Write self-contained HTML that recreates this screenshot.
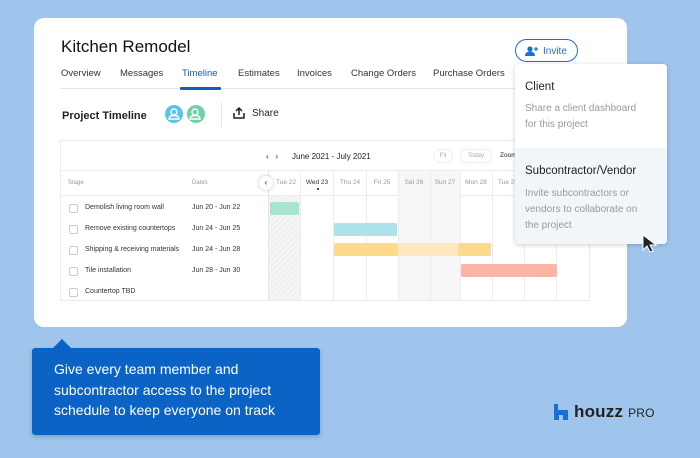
<!DOCTYPE html>
<html><head><meta charset="utf-8"><style>
*{margin:0;padding:0;box-sizing:border-box}
body{width:700px;height:458px;background:#9fc5ec;font-family:"Liberation Sans",sans-serif;position:relative;overflow:hidden;color:#222}
.abs{position:absolute}
.card{left:34px;top:18px;width:593px;height:309px;background:#fff;border-radius:10px}
.tab{top:68px;font-size:9.5px;color:#333}
.day{top:179px;font-size:6.5px;color:#999;width:32px;text-align:center}
.vl{top:170px;width:1px;height:130px;background:#ececec}
.row{font-size:7px;color:#333}
.cb{width:9px;height:9px;border:1px solid #ccc;border-radius:2px;background:#fff}
.bar{height:13px;border-radius:2px}
</style></head><body>
<div class="abs card"></div>
<div class="abs" style="left:61px;top:37px;font-size:17px;color:#111">Kitchen Remodel</div>
<div class="abs tab" style="left:61px">Overview</div>
<div class="abs tab" style="left:120px">Messages</div>
<div class="abs tab" style="left:182px;color:#0b5fbf">Timeline</div>
<div class="abs tab" style="left:238px">Estimates</div>
<div class="abs tab" style="left:297px">Invoices</div>
<div class="abs tab" style="left:351px">Change Orders</div>
<div class="abs tab" style="left:433px">Purchase Orders</div>
<div class="abs" style="left:60px;top:88px;width:455px;height:1px;background:#e6e6e6"></div>
<div class="abs" style="left:180px;top:87px;width:41px;height:3px;background:#0b5fbf;border-radius:1px"></div>
<div class="abs" style="left:62px;top:110px;font-size:11px;font-weight:bold;color:#222">Project Timeline</div>
<svg class="abs" style="left:165px;top:105px" width="18" height="18" viewBox="0 0 18 18"><circle cx="9" cy="9" r="9" fill="#5ac4e8"/><circle cx="9" cy="7" r="3" fill="none" stroke="#fff" stroke-width="1.4"/><path d="M4 14c0-2.5 2-3.5 5-3.5s5 1 5 3.5z" fill="none" stroke="#fff" stroke-width="1.4"/></svg>
<svg class="abs" style="left:187px;top:105px" width="18" height="18" viewBox="0 0 18 18"><circle cx="9" cy="9" r="9" fill="#6fd0a6"/><circle cx="8" cy="7" r="3" fill="none" stroke="#fff" stroke-width="1.4"/><path d="M3 14c0-2.5 2-3.5 5-3.5s5 1 5 3.5z" fill="none" stroke="#fff" stroke-width="1.4"/></svg>
<div class="abs" style="left:221px;top:102px;width:1px;height:25px;background:#e6e6e6"></div>
<svg class="abs" style="left:233px;top:107px" width="12" height="12" viewBox="0 0 12 12" fill="none" stroke="#222" stroke-width="1.5"><path d="M6 8V1M3 4l3-3 3 3M1 6v5h10V6"/></svg>
<div class="abs" style="left:252px;top:108px;font-size:10px">Share</div>
<!-- gantt -->
<div class="abs" style="left:60px;top:140px;width:530px;height:161px;border:1px solid #ececec;background:#fff"></div>
<div class="abs" style="left:60px;top:170px;width:530px;height:1px;background:#ececec"></div>
<div class="abs" style="left:60px;top:195px;width:530px;height:1px;background:#ececec"></div>
<div class="abs" style="left:266px;top:152px;font-size:8px">‹ &nbsp; ›</div>
<div class="abs" style="left:292px;top:152px;font-size:8px;color:#222">June 2021 - July 2021</div>
<div class="abs" style="left:433px;top:149px;width:20px;height:14px;border:1px solid #eee;border-radius:7px;font-size:6px;color:#aaa;text-align:center;line-height:12px">Fit</div>
<div class="abs" style="left:460px;top:149px;width:32px;height:14px;border:1px solid #eee;border-radius:7px;font-size:6px;color:#aaa;text-align:center;line-height:12px">Today</div>
<div class="abs" style="left:500px;top:152px;font-size:6.5px">Zoom</div>
<div class="abs" style="left:68px;top:180px;font-size:6px;color:#999">Stage</div>
<div class="abs" style="left:192px;top:180px;font-size:6px;color:#999">Dates</div>
<div class="abs" style="left:268px;top:171px;width:1px;height:130px;background:#e6e6e6"></div>
<div class="abs" style="left:269px;top:196px;width:31px;height:104px;background:repeating-linear-gradient(135deg,#f6f6f6 0 2px,#efefef 2px 4px)"></div>
<div class="abs" style="left:398px;top:171px;width:62px;height:129px;background:#f7f7f7"></div>
<div class="abs vl" style="left:300px"></div><div class="abs vl" style="left:333px"></div><div class="abs vl" style="left:366px"></div><div class="abs vl" style="left:398px"></div><div class="abs vl" style="left:430px"></div><div class="abs vl" style="left:460px"></div><div class="abs vl" style="left:492px"></div><div class="abs vl" style="left:524px"></div><div class="abs vl" style="left:556px"></div>
<div class="abs day" style="left:270px">Tue 22</div>
<div class="abs day" style="left:301px;color:#333">Wed 23</div>
<div class="abs" style="left:317px;top:188px;width:2px;height:2px;background:#0b5fbf"></div>
<div class="abs day" style="left:334px">Thu 24</div>
<div class="abs day" style="left:366px">Fri 25</div>
<div class="abs day" style="left:398px">Sat 26</div>
<div class="abs day" style="left:429px">Sun 27</div>
<div class="abs day" style="left:460px">Mon 28</div>
<div class="abs day" style="left:492px">Tue 29</div>
<div class="abs" style="left:259px;top:176px;width:14px;height:14px;border-radius:50%;background:#fff;box-shadow:0 0 3px rgba(0,0,0,.25);font-size:8px;text-align:center;line-height:13px">‹</div>
<div class="abs cb" style="left:69px;top:204px"></div><div class="abs row" style="left:85px;top:204px">Demolish living room wall</div><div class="abs row" style="left:192px;top:204px">Jun 20 - Jun 22</div>
<div class="abs cb" style="left:69px;top:225px"></div><div class="abs row" style="left:85px;top:225px">Remove existing countertops</div><div class="abs row" style="left:192px;top:225px">Jun 24 - Jun 25</div>
<div class="abs cb" style="left:69px;top:246px"></div><div class="abs row" style="left:85px;top:246px">Shipping &amp; receiving materials</div><div class="abs row" style="left:192px;top:246px">Jun 24 - Jun 28</div>
<div class="abs cb" style="left:69px;top:267px"></div><div class="abs row" style="left:85px;top:267px">Tile installation</div><div class="abs row" style="left:192px;top:267px">Jun 28 - Jun 30</div>
<div class="abs cb" style="left:69px;top:288px"></div><div class="abs row" style="left:85px;top:288px">Countertop TBD</div>
<div class="abs bar" style="left:270px;top:202px;width:29px;background:#a9e4cf"></div>
<div class="abs bar" style="left:334px;top:223px;width:63px;background:#ade2ea"></div>
<div class="abs bar" style="left:334px;top:243px;width:64px;background:#fdd98c"></div>
<div class="abs bar" style="left:398px;top:243px;width:60px;background:#fde8bf;border-radius:0"></div>
<div class="abs bar" style="left:458px;top:243px;width:33px;background:#fdd98c"></div>
<div class="abs bar" style="left:461px;top:264px;width:96px;background:#fbb5a7"></div>
<!-- invite -->
<div class="abs" style="left:515px;top:39px;width:63px;height:23px;border:1.5px solid #1a6fd0;border-radius:12px;color:#1a6fd0;font-size:10px;line-height:21px;padding-left:27px;padding-top:1px">Invite</div>
<svg class="abs" style="left:525px;top:46px" width="14" height="10" viewBox="0 0 14 10" fill="#1a6fd0"><circle cx="5" cy="3" r="2.6"/><path d="M0 10c0-3 2-4.5 5-4.5s5 1.5 5 4.5z"/><path d="M11 1v4M9 3h4" stroke="#1a6fd0" stroke-width="1.2"/></svg>
<div class="abs" style="left:515px;top:64px;width:152px;height:180px;background:#fff;border-radius:4px;box-shadow:0 1px 5px rgba(0,0,0,.2);overflow:hidden">
<div style="position:absolute;left:0;top:84px;width:152px;height:96px;background:#f2f6fb"></div>
<div style="position:absolute;left:10px;top:17px;font-size:11.5px;color:#222">Client</div>
<div style="position:absolute;left:10px;top:37px;font-size:10px;color:#999;line-height:16px">Share a client dashboard<br>for this project</div>
<div style="position:absolute;left:10px;top:101px;font-size:11.5px;color:#222">Subcontractor/Vendor</div>
<div style="position:absolute;left:10px;top:122px;font-size:10px;color:#999;line-height:16px">Invite subcontractors or<br>vendors to collaborate on<br>the project</div>
</div>
<svg class="abs" style="left:642px;top:234px" width="16" height="20" viewBox="0 0 16 20"><path d="M1 1v15l4-4 3 6 3-1-3-6h6z" fill="#222" stroke="#fff" stroke-width="1"/></svg>
<!-- callout -->
<div class="abs" style="left:53px;top:339px;width:0;height:0;border-left:9px solid transparent;border-right:9px solid transparent;border-bottom:9px solid #0b63c5"></div>
<div class="abs" style="left:32px;top:348px;width:288px;height:87px;background:#0b63c5;border-radius:3px;box-shadow:0 2px 4px rgba(0,0,0,.2);color:#fff;font-size:14px;line-height:20.5px;padding:11px 0 0 22px">Give every team member and<br>subcontractor access to the project<br>schedule to keep everyone on track</div>
<!-- logo -->
<svg class="abs" style="left:554px;top:404px" width="14" height="16" viewBox="0 0 14 16" fill="#1a6fd0"><path d="M0 0h4v6h10v10H9v-5H5v5H0z"/></svg>
<div class="abs" style="left:574px;top:402px;font-size:17px;font-weight:bold;color:#222;letter-spacing:0.2px">houzz <span style="font-size:12px;font-weight:normal">PRO</span></div>
</body></html>
